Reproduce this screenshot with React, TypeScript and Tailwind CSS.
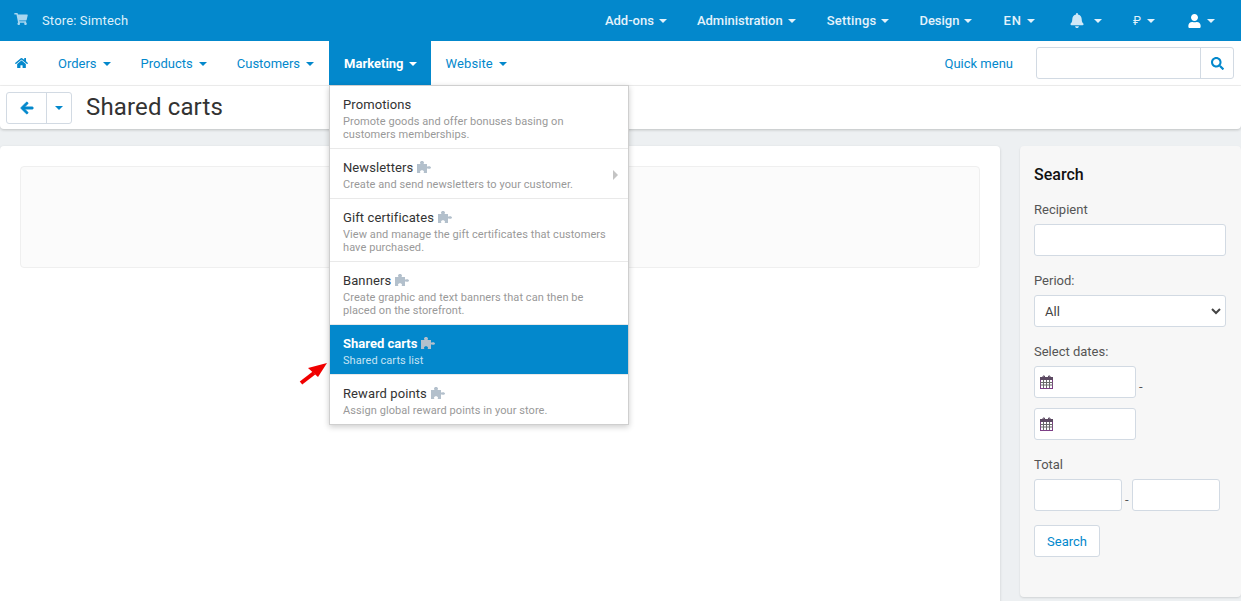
import React from 'react';
import { FaArrowLeft, FaBell, FaHome, FaSearch, FaShoppingCart, FaUser } from 'react-icons/fa';

const Caret = ({ className = '' }: { className?: string }) => (
  <span className={`inline-block w-0 h-0 border-x-[4px] border-x-transparent border-t-[4px] border-t-current ${className}`} />
);

const topItems = [
  { label: 'Add-ons', cls: 'ml-0' },
  { label: 'Administration', cls: 'ml-[30px]' },
  { label: 'Settings', cls: 'ml-[31px] tracking-[0.2px]' },
  { label: 'Design', cls: 'ml-[30px]' },
  { label: 'EN', cls: 'ml-[31px] tracking-[1px]' },
];

const menuItems = [
  { title: 'Promotions', desc: 'Promote goods and offer bonuses basing on customers memberships.', addon: false },
  { title: 'Newsletters', desc: 'Create and send newsletters to your customer.', addon: true, sub: true },
  { title: 'Gift certificates', desc: 'View and manage the gift certificates that customers have purchased.', addon: true },
  { title: 'Banners', desc: 'Create graphic and text banners that can then be placed on the storefront.', addon: true },
  { title: 'Shared carts', desc: 'Shared carts list', addon: true, active: true },
  { title: 'Reward points', desc: 'Assign global reward points in your store.', addon: true },
];

// older font-awesome puzzle piece, knobs on top and right
function PuzzleIcon() {
  return (
    <svg width="14" height="12" viewBox="0 0 14 12" className="shrink-0 -mt-[3px] text-[#b3c0cc]">
      <path
        fill="currentColor"
        d="M0 3h3.500C3.200 2.600 3 2.200 3 1.600 3 .7 3.900 0 5 0s2 .7 2 1.600c0 .6-.2 1-.5 1.400H10v2.600h1c.3-.2.6-.4 1.100-.4 1 0 1.900.6 1.900 1.300s-.9 1.300-1.900 1.300c-.5 0-.8-.2-1.100-.4h-1V12H6.500c.3-.4.5-.8.5-1.300C7 9.800 6.100 9.200 5 9.200s-2 .6-2 1.500c0 .5.200.9.500 1.300H0z"
      />
    </svg>
  );
}

function CalendarIcon() {
  return (
    <svg width="13" height="14" viewBox="0 0 13 14" className="shrink-0">
      <rect x="0.5" y="2.5" width="12" height="11" fill="#fff" stroke="#7d3f86" />
      <rect x="0" y="2" width="13" height="3" fill="#5d4a63" />
      <path d="M0 7.500h13M0 10h13M3.500 5v8M6.500 5v8M9.500 5v8" stroke="#6a6a6a" strokeWidth="1" />
      <path d="M3 3V1h1.500v2M8.500 3V1H10v2" fill="none" stroke="#5d4a63" strokeWidth="1" />
    </svg>
  );
}

function Field({ className = '' }: { className?: string }) {
  return <div className={`h-8 bg-white border border-[#d2dae3] rounded-[3px] ${className}`} />;
}

function DropdownMenu() {
  return (
    <div className="absolute left-[329px] top-[85px] w-[300px] z-20 bg-white border border-[#cfcfcf] shadow-[0_2px_6px_rgba(0,0,0,0.2)]">
      {menuItems.map((item, i) => (
        <div
          key={item.title}
          className={`relative px-[13px] pt-[10px] pb-[7px] ${i > 0 ? 'border-t border-[#e9e9e9]' : ''} ${item.active ? 'bg-[#0388cc] text-white' : ''}`}
        >
          <div className={`flex items-center gap-[4px] text-[13px] leading-[18px] ${item.active ? 'font-bold text-white' : 'text-[#333] tracking-[0.1px]'}`}>
            {item.title}
            {item.addon && <PuzzleIcon />}
          </div>
          <div className={`text-[11px] leading-[13px] mt-[1px] pr-[6px] tracking-[0.07px] ${item.active ? 'text-[#c6e3f3]' : 'text-[#999]'}`}>{item.desc}</div>
          {item.sub && (
            <span className="absolute right-[10px] top-[21px] w-0 h-0 border-y-[5px] border-y-transparent border-l-[5px] border-l-[#c4c4c4]" />
          )}
        </div>
      ))}
    </div>
  );
}

export default function App() {
  return (
    <div className="relative w-[1241px] h-[601px] overflow-hidden bg-[#edf0f2] text-[13px] font-['Roboto',sans-serif]">
      {/* top bar */}
      <div className="h-[41px] bg-[#0388cc] flex items-center text-white">
        <FaShoppingCart className="ml-[14px] w-[14px] h-[12px] text-[#a9d6ef] -mt-[4px]" />
        <span className="ml-[14px] text-[13px] tracking-[0.15px] text-[#dff0fa]">Store: Simtech</span>
        <div className="ml-auto flex items-center mr-[26px] font-medium text-[#e3f2fb]">
          {topItems.map((t) => (
            <span key={t.label} className={`flex items-center gap-[5px] ${t.cls}`}>
              {t.label}
              <Caret />
            </span>
          ))}
          <span className="flex items-center ml-[35px] gap-[10px]">
            <FaBell className="w-[14px] h-[15px] text-[#cfe8f7]" />
            <Caret />
          </span>
          <span className="flex items-center ml-[31px] gap-[6px] text-[12px] font-normal">
            ₽
            <Caret />
          </span>
          <span className="flex items-center ml-[33px] gap-[6px]">
            <FaUser className="w-[13px] h-[14px] text-white" />
            <Caret />
          </span>
        </div>
      </div>

      {/* nav bar */}
      <div className="h-[45px] bg-white flex items-center border-b border-[#f1f1f1] text-[#0388cc]">
        <FaHome className="ml-[15px] w-[13px] h-[12px]" />
        <span className="ml-[30px] pt-[2px] flex items-center gap-[6px]">Orders <Caret /></span>
        <span className="ml-[30px] pt-[2px] flex items-center gap-[6px]">Products <Caret /></span>
        <span className="ml-[30px] pt-[2px] flex items-center gap-[6px]">Customers <Caret /></span>
        <span className="ml-[15px] h-full pt-[2px] pl-[15px] pr-[14px] bg-[#0388cc] text-white font-bold flex items-center gap-[5px]">Marketing <Caret /></span>
        <span className="ml-[15px] pt-[2px] flex items-center gap-[6px] tracking-[0.1px]">Website <Caret /></span>
        <span className="ml-auto pt-[2px]">Quick menu</span>
        <div className="ml-[23px] mr-[7px] flex h-8 w-[198px] border border-[#d2dae3] rounded-[3px]">
          <div className="flex-1" />
          <div className="w-[33px] border-l border-[#d2dae3] flex items-center justify-center">
            <FaSearch className="w-[13px] h-[13px]" />
          </div>
        </div>
      </div>

      {/* title bar */}
      <div className="h-[43px] bg-white rounded-b-[4px] shadow-[0_1px_3px_rgba(0,0,0,0.2)] flex items-center pl-[6px]">
        <div className="flex h-8 border border-[#d2dae3] rounded-[3px] text-[#0388cc]">
          <div className="w-[39px] flex items-center justify-center">
            <FaArrowLeft className="w-[14px] h-[14px]" stroke="currentColor" strokeWidth={30} />
          </div>
          <div className="w-[25px] border-l border-[#d2dae3] flex items-center justify-center">
            <Caret />
          </div>
        </div>
        <h1 className="ml-[14px] pb-[2px] text-[24px] text-[#333] tracking-[0.15px]">Shared carts</h1>
      </div>

      {/* content */}
      <div className="flex mt-[17px] gap-[20px] items-start">
        <div className="w-[1000px] h-[460px] bg-white rounded-t-[4px] shadow-[0_1px_3px_rgba(0,0,0,0.15)] p-[20px]">
          <div className="h-[102px] bg-[#fbfbfb] border border-[#efefef] rounded-[4px]" />
        </div>
        <div className="w-[221px] h-[451px] bg-[#f7f7f7] rounded-[4px] shadow-[0_1px_2px_rgba(0,0,0,0.12)] px-[14px] pt-[19px] text-[#555]">
          <h3 className="text-[16px] leading-[20px] font-medium text-[#111]">Search</h3>
          <div className="mt-[16px] leading-[18px]">Recipient</div>
          <Field className="mt-[5px] w-[192px]" />
          <div className="mt-[16px] leading-[18px]">Period:</div>
          <div className="mt-[5px] w-[192px] h-8 pt-[1px] bg-white border border-[#d2dae3] rounded-[3px] flex items-center justify-between pl-[10px] pr-[4px] text-[#444]">
            All
            <svg width="10" height="7" viewBox="0 0 10 7"><path d="M1 1l4 4 4-4" fill="none" stroke="#444" strokeWidth="2" /></svg>
          </div>
          <div className="mt-[16px] leading-[18px]">Select dates:</div>
          <div className="mt-[5px] flex items-center gap-[3px]">
            <div className="w-[102px] h-8 bg-white border border-[#d2dae3] rounded-[3px] flex items-center pl-[5px]"><CalendarIcon /></div>
            <span className="self-end mb-[2px]">-</span>
          </div>
          <div className="mt-[10px] w-[102px] h-8 bg-white border border-[#d2dae3] rounded-[3px] flex items-center pl-[5px]"><CalendarIcon /></div>
          <div className="mt-[16px] leading-[18px]">Total</div>
          <div className="mt-[5px] flex items-center gap-[3px]">
            <Field className="w-[88px]" />
            <span className="self-end mb-[2px]">-</span>
            <Field className="w-[88px]" />
          </div>
          <div className="mt-[14px] w-[66px] h-8 pt-[1px] bg-white border border-[#d2dae3] rounded-[3px] flex items-center justify-center text-[#0388cc]">Search</div>
        </div>
      </div>

      <DropdownMenu />

      {/* red annotation arrow */}
      <svg className="absolute left-[298px] top-[362px] z-30" width="32" height="24" viewBox="0 0 32 24">
        <path d="M3 21L16 11" stroke="#f00000" strokeWidth="4" />
        <path d="M29 1L10 6L20 15Z" fill="#f00000" />
      </svg>
    </div>
  );
}
